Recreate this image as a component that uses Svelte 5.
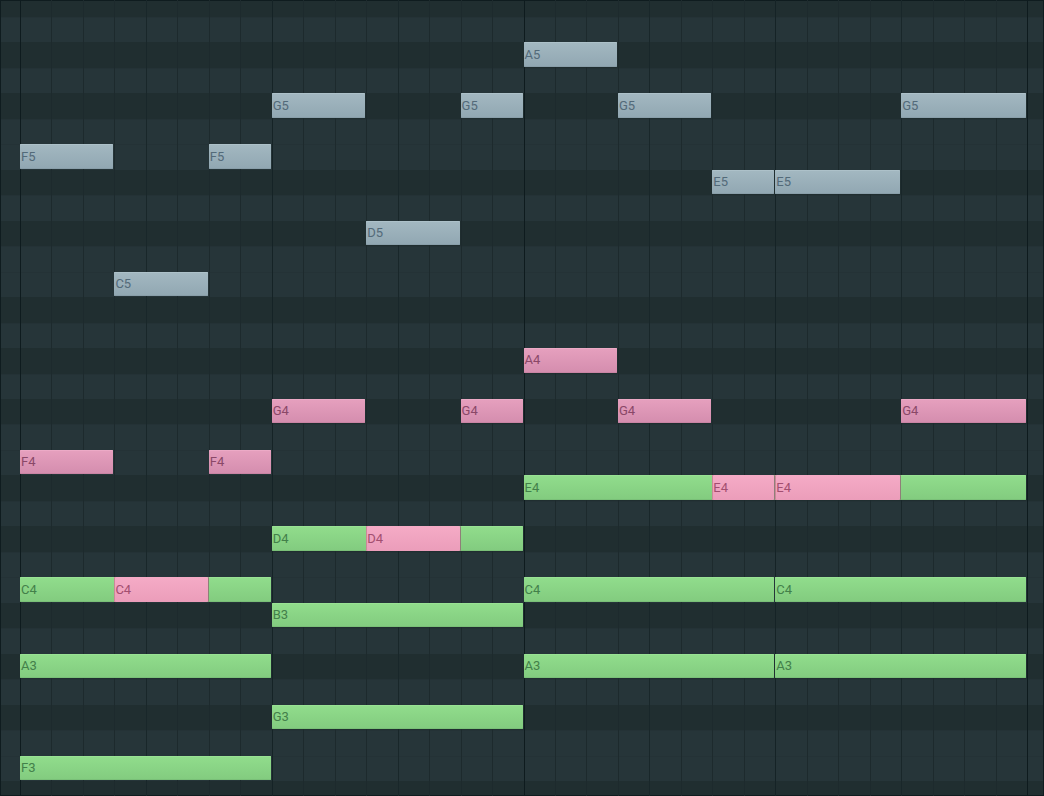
<script lang="ts">
    type Note = { pitch: string; from: number; to: number; tone: string };

    const names = ["C", "C#", "D", "D#", "E", "F", "F#", "G", "G#", "A", "A#", "B"];
    const darkLanes = ["B", "A", "G", "E", "D"];
    const steps = 32;

    // midi numbers of the visible lanes, B5 at the top down to E3
    const top = 83;
    const bottom = 52;

    const lanes: string[] = [];
    for (let midi = top; midi >= bottom; midi--) {
        lanes.push(names[midi % 12] + (Math.floor(midi / 12) - 1));
    }

    // from / to are sixteenth steps
    const notes: Note[] = [
        { pitch: "F5", from: 0, to: 3, tone: "blue" },
        { pitch: "C5", from: 3, to: 6, tone: "blue" },
        { pitch: "F5", from: 6, to: 8, tone: "blue" },
        { pitch: "G5", from: 8, to: 11, tone: "blue" },
        { pitch: "D5", from: 11, to: 14, tone: "blue" },
        { pitch: "G5", from: 14, to: 16, tone: "blue" },
        { pitch: "A5", from: 16, to: 19, tone: "blue" },
        { pitch: "G5", from: 19, to: 22, tone: "blue" },
        { pitch: "E5", from: 22, to: 24, tone: "blue" },
        { pitch: "E5", from: 24, to: 28, tone: "blue" },
        { pitch: "G5", from: 28, to: 32, tone: "blue" },

        { pitch: "C4", from: 0, to: 8, tone: "green" },
        { pitch: "A3", from: 0, to: 8, tone: "green" },
        { pitch: "F3", from: 0, to: 8, tone: "green" },
        { pitch: "D4", from: 8, to: 16, tone: "green" },
        { pitch: "B3", from: 8, to: 16, tone: "green" },
        { pitch: "G3", from: 8, to: 16, tone: "green" },
        { pitch: "E4", from: 16, to: 32, tone: "green" },
        { pitch: "C4", from: 16, to: 24, tone: "green" },
        { pitch: "A3", from: 16, to: 24, tone: "green" },
        { pitch: "C4", from: 24, to: 32, tone: "green" },
        { pitch: "A3", from: 24, to: 32, tone: "green" },

        { pitch: "F4", from: 0, to: 3, tone: "pink" },
        { pitch: "C4", from: 3, to: 6, tone: "pink over" },
        { pitch: "F4", from: 6, to: 8, tone: "pink" },
        { pitch: "G4", from: 8, to: 11, tone: "pink" },
        { pitch: "D4", from: 11, to: 14, tone: "pink over" },
        { pitch: "G4", from: 14, to: 16, tone: "pink" },
        { pitch: "A4", from: 16, to: 19, tone: "pink" },
        { pitch: "G4", from: 19, to: 22, tone: "pink" },
        { pitch: "E4", from: 22, to: 24, tone: "pink over" },
        { pitch: "E4", from: 24, to: 28, tone: "pink over" },
        { pitch: "G4", from: 28, to: 32, tone: "pink" },
    ];

    function isDark(lane: string) {
        return darkLanes.includes(lane.slice(0, -1));
    }

    function row(pitch: string) {
        return lanes.indexOf(pitch) + 1;
    }
</script>

<main class="roll">
    {#each lanes as lane, i}
        <div class="lane" class:dark={isDark(lane)} style="grid-row: {i + 1}"></div>
    {/each}

    {#each { length: steps + 1 } as _, i}
        <div
            class="line"
            class:beat={i % 4 === 0}
            class:half={i % 8 === 0}
            class:bar={i % 16 === 0}
            style="grid-column: {i + 2}"
        ></div>
    {/each}

    {#each notes as note}
        <div
            class="note {note.tone}"
            style="grid-row: {row(note.pitch)}; grid-column: {note.from + 2} / {note.to + 2}"
        >
            {note.pitch}
        </div>
    {/each}
</main>

<style>
    :global(body) {
        margin: 0;
        background: #212f31;
    }

    .roll {
        display: grid;
        /* first and last lanes are cut off by the window */
        grid-template-rows: 34fr repeat(30, 51fr) 30fr;
        grid-template-columns: 20px repeat(32, minmax(0, 1fr)) 17px;
        height: 100vh;
        overflow: hidden;
        box-shadow: inset 0 0 0 1px #0f1c1f;
        font-family: Roboto, "Liberation Sans", sans-serif;
        font-size: 13px;
    }

    .lane {
        grid-column: 1 / -1;
        min-height: 0;
        z-index: -1;
        background: #263539;
        box-shadow: inset 0 1px 0 #243236;
    }
    .lane.dark {
        background: #202e30;
        box-shadow: none;
    }

    .line {
        grid-row: 1 / -1;
        border-left: 1px solid #1d2a2d;
    }
    .line.beat {
        border-color: #19272a;
    }
    .line.half {
        border-color: #152326;
    }
    .line.bar {
        border-color: #0e1b1e;
    }

    .note {
        display: flex;
        align-items: center;
        box-sizing: border-box;
        min-height: 0;
        margin: 0 1px 1px 0;
        padding-left: 1px;
        border-radius: 1px;
        line-height: 16px;
        white-space: nowrap;
    }

    .blue {
        background: linear-gradient(#a3b8c1, #91a7b2);
        box-shadow: inset 0 1px 0 #adc1c9, inset 0 -1px 0 #899ea9;
        color: #536a79;
    }

    .green {
        background: linear-gradient(#91dd8c, #82cb7f);
        box-shadow: inset 0 1px 0 #99e294, inset 0 -1px 0 #7ac078;
        color: #43804a;
    }

    .pink {
        background: linear-gradient(#e6a0be, #d48dae);
        box-shadow: inset 0 1px 0 #ecaac6, inset 0 -1px 0 #c984a4;
        color: #8a4868;
    }
    .pink.over {
        background: linear-gradient(#f5abc6, #eb9dba);
        box-shadow: inset 1px 0 0 #c98a98, 1px 0 0 #8f7f78;
        color: #a34f70;
    }
</style>
